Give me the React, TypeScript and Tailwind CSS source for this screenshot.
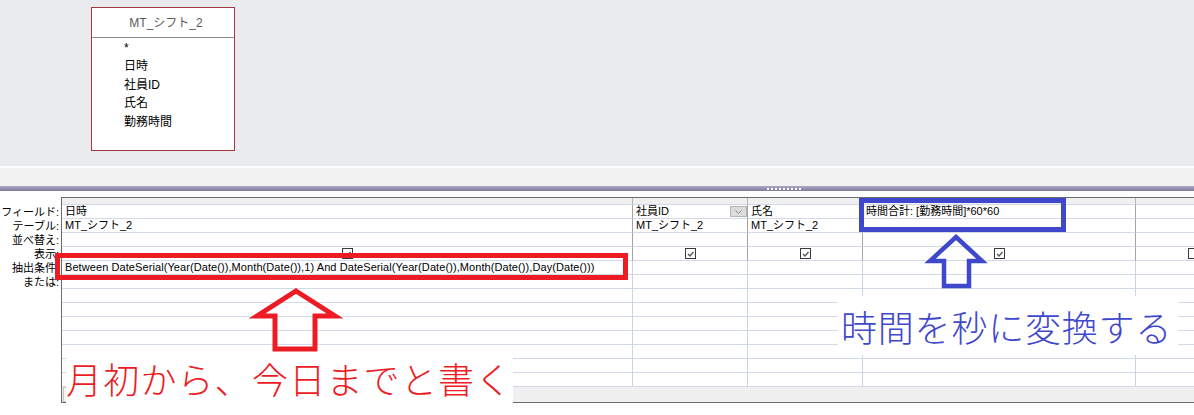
import React from "react";

const FONT = { fontFamily: '"Liberation Sans", "Noto Sans CJK JP", sans-serif' };

// column widths incl. right border
const COLS = ["w-[571px]", "w-[115px]", "w-[115px]", "w-[273px]", "w-[115px]", "w-[115px]"];

const LABELS = ["フィールド:", "テーブル:", "並べ替え:", "表示:", "抽出条件:", "または:"];

function Check({ checked = true }: { checked?: boolean }) {
  return (
    <span className="flex w-[11px] h-[11px] border border-[#3a3a3a] bg-white items-center justify-center">
      {checked && (
        <svg width="9" height="9" viewBox="0 0 9 9">
          <path d="M2 5 L4 7 L7.5 3" fill="none" stroke="#555" strokeWidth="1.3" />
        </svg>
      )}
    </span>
  );
}

function DropButton() {
  return (
    <span className="flex w-[17px] h-[11px] mt-[1px] bg-[#dcdcdc] border border-[#b4b4b4] items-center justify-center">
      <svg width="9" height="6" viewBox="0 0 9 6">
        <path d="M1.5 1.5 L4.5 4.5 L7.5 1.5" fill="none" stroke="#8a8a8a" strokeWidth="1" />
      </svg>
    </span>
  );
}

function Row({ idx, cells }: { idx: number; cells: React.ReactNode[] }) {
  const vline = idx < 4 ? "border-r-[#a3a3a3]" : "border-r-[#cad3e3]";
  return (
    <div className="flex h-[14px]">
      {COLS.map((w, i) => (
        <div
          key={i}
          className={`${w} shrink-0 h-[14px] border-b border-r border-b-[#d2d9e7] ${vline} pl-[3px] flex overflow-hidden whitespace-nowrap`}
        >
          {cells[i] ?? null}
        </div>
      ))}
    </div>
  );
}

export default function App() {
  const txt = (s: string) => <span className="text-[11px] leading-[13px] text-black">{s}</span>;
  const center = (n: React.ReactNode) => <div className="flex-1 flex items-center justify-center pr-[3px]">{n}</div>;

  const rows: React.ReactNode[][] = [
    [
      txt("日時"),
      <div className="flex-1 flex justify-between">{txt("社員ID")}<DropButton /></div>,
      txt("氏名"),
      txt("時間合計: [勤務時間]*60*60"),
    ],
    [txt("MT_シフト_2"), txt("MT_シフト_2"), txt("MT_シフト_2")],
    [],
    [center(<Check />), center(<Check />), center(<Check />), center(<Check />), center(<Check checked={false} />)],
    [
      <span className="text-[11px] leading-[13px] text-black tracking-[0.08px]">
        Between DateSerial(Year(Date()),Month(Date()),1) And DateSerial(Year(Date()),Month(Date()),Day(Date()))
      </span>,
    ],
  ];
  for (let i = rows.length; i < 13; i++) rows.push([]);

  return (
    <div className="relative w-[1194px] h-[415px] overflow-hidden bg-white" style={FONT}>
      {/* table design surface */}
      <div className="h-[166px] bg-[#e9ebee] pl-[91px] pt-[7px]">
        <div className="w-[144px] h-[144px] border border-[#a5383c] bg-white flex flex-col">
          <div className="h-[30px] border-b border-[#8c8c8c] flex items-center justify-center pl-[6px] text-[12px] text-[#5a5a5a]">
            MT_シフト_2
          </div>
          <div className="pl-[32px] text-[12px] leading-[18.4px] text-black pt-[1px]">
            <div>*</div>
            <div>日時</div>
            <div>社員ID</div>
            <div>氏名</div>
            <div>勤務時間</div>
          </div>
        </div>
      </div>
      <div className="h-[2px] bg-white" />
      <div className="h-[18px] bg-[#f2f2f2]" />
      {/* splitter */}
      <div className="h-[5px] bg-gradient-to-b from-[#aeaac4] to-[#7e7a9c] flex items-center pl-[767px] gap-[2px]">
        {Array.from({ length: 9 }).map((_, i) => (
          <span key={i} className="w-[2px] h-[2px] bg-white" />
        ))}
      </div>
      <div className="h-[6px] bg-white" />

      {/* query grid */}
      <div className="flex">
        <div className="w-[61px] shrink-0 pt-[8px] pr-[2px] text-right">
          {LABELS.map((l) => (
            <div key={l} className="h-[14px] text-[11px] leading-[14px] text-black whitespace-nowrap">
              {l}
            </div>
          ))}
        </div>
        <div className="flex-1 min-w-0 border-l border-t border-[#6b6b6b] overflow-hidden">
          <div className="flex h-[7px]">
            {COLS.map((w, i) => (
              <div key={i} className={`${w} shrink-0 h-[7px] bg-[#f0f0f0] border-b border-r border-b-[#d2d9e7] border-r-[#b8b8b8]`} />
            ))}
          </div>
          {rows.map((cells, i) => (
            <Row key={i} idx={i} cells={cells} />
          ))}
          <div className="h-[16px] bg-[#f0f0f0] border-b border-[#6b6b6b] flex pl-[1px]">
            <div className="w-[17px] h-[15px] border border-[#c4c4c4] bg-[#f4f4f4]" />
          </div>
        </div>
      </div>

      {/* annotations */}
      <div className="absolute left-[838px] top-[296px] w-[340px] h-[59px] bg-white flex items-center pl-[3px]">
        <span className="text-[36px] leading-[36px] font-light text-[#3f48cc] tracking-[0.8px]" style={{ fontFamily: '"Noto Sans CJK JP", sans-serif' }}>
          時間を秒に変換する
        </span>
      </div>
      <div className="absolute left-[66px] top-[357px] w-[447px] h-[58px] bg-white pt-[3px]">
        <span className="text-[36px] leading-[36px] font-light text-[#ed1c24] tracking-[1.2px]" style={{ fontFamily: '"Noto Sans CJK JP", sans-serif' }}>
          月初から、今日までと書く
        </span>
      </div>
      <svg className="absolute left-0 top-0 pointer-events-none" width="1194" height="415" viewBox="0 0 1194 415">
        <rect x="57.5" y="255.5" width="568" height="22" fill="none" stroke="#ed1c24" strokeWidth="5" />
        <polygon
          points="296,291 335,316 315,316 315,349 275,349 275,316 257,316"
          fill="none"
          stroke="#ed1c24"
          strokeWidth="5"
          strokeLinejoin="miter"
        />
        <rect x="861.5" y="200.5" width="202" height="29" fill="none" stroke="#3f48cc" strokeWidth="5" />
        <polygon
          points="956,237 982,261 969,261 969,286 944,286 944,261 930,261"
          fill="none"
          stroke="#3f48cc"
          strokeWidth="4.5"
          strokeLinejoin="miter"
        />
      </svg>
    </div>
  );
}
